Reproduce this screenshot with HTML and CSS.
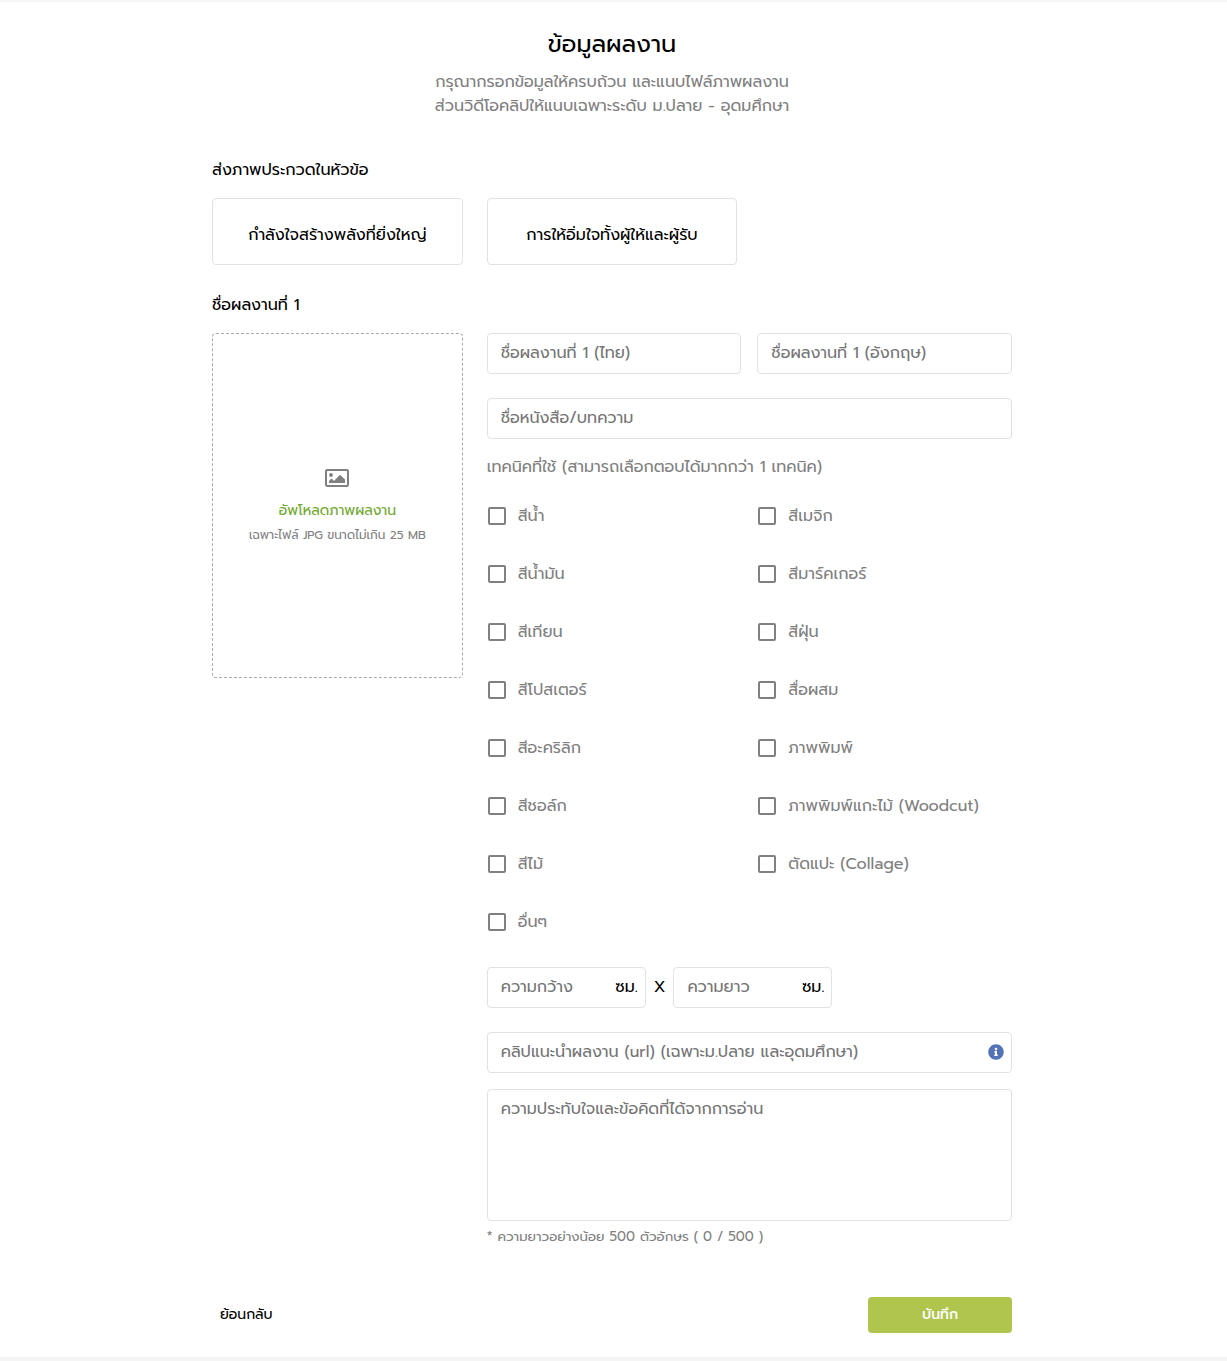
FILE: index.html
```html
<!DOCTYPE html>
<html lang="th">
<head>
<meta charset="utf-8">
<meta name="viewport" content="width=device-width, initial-scale=1">
<title>ข้อมูลผลงาน</title>
<link rel="stylesheet" href="styles.css">
</head>
<body>
<main class="page">
  <form class="entry">
    <header class="intro">
      <h1 class="title">ข้อมูลผลงาน</h1>
      <p class="lead">กรุณากรอกข้อมูลให้ครบถ้วน และแนบไฟล์ภาพผลงาน<br>ส่วนวิดีโอคลิปให้แนบเฉพาะระดับ ม.ปลาย - อุดมศึกษา</p>
    </header>

    <h2 class="section-title">ส่งภาพประกวดในหัวข้อ</h2>
    <div class="columns topics">
      <button type="button" class="topic">กำลังใจสร้างพลังที่ยิ่งใหญ่</button>
      <button type="button" class="topic">การให้อิ่มใจทั้งผู้ให้และผู้รับ</button>
    </div>

    <h2 class="section-title">ชื่อผลงานที่ 1</h2>
    <div class="columns">
      <button type="button" class="upload">
        <svg class="upload-icon" viewBox="0 0 24 18" aria-hidden="true">
          <path fill-rule="evenodd" d="M2.250 0H21.750A2.250 2.250 0 0 1 24 2.250V15.750A2.250 2.250 0 0 1 21.750 18H2.250A2.250 2.250 0 0 1 0 15.750V2.250A2.250 2.250 0 0 1 2.250 0ZM2.500 2A.5.500 0 0 0 2 2.500V15.500A.5.500 0 0 0 2.500 16H21.500A.5.500 0 0 0 22 15.500V2.500A.5.500 0 0 0 21.500 2Z"/>
          <circle cx="6" cy="6" r="1.900"/>
          <path d="M4 14V12L6.100 9.800Q6.500 9.500 6.900 9.800L9 12L14.500 6.200Q15 5.800 15.500 6.200L20 10.500V14Z"/>
        </svg>
        <span class="upload-title">อัพโหลดภาพผลงาน</span>
        <span class="upload-hint">เฉพาะไฟล์ JPG ขนาดไม่เกิน 25 MB</span>
      </button>

      <div class="fields">
        <div class="pair">
          <input class="field" type="text" aria-label="ชื่อผลงานที่ 1 (ไทย)" placeholder="ชื่อผลงานที่ 1 (ไทย)">
          <input class="field" type="text" aria-label="ชื่อผลงานที่ 1 (อังกฤษ)" placeholder="ชื่อผลงานที่ 1 (อังกฤษ)">
        </div>
        <input class="field book" type="text" aria-label="ชื่อหนังสือ/บทความ" placeholder="ชื่อหนังสือ/บทความ">

        <fieldset class="techniques">
          <legend class="legend">เทคนิคที่ใช้ (สามารถเลือกตอบได้มากกว่า 1 เทคนิค)</legend>
          <div class="pair options">
            <label class="option"><input class="tick" type="checkbox">สีน้ำ</label>
            <label class="option"><input class="tick" type="checkbox">สีเมจิก</label>
            <label class="option"><input class="tick" type="checkbox">สีน้ำมัน</label>
            <label class="option"><input class="tick" type="checkbox">สีมาร์คเกอร์</label>
            <label class="option"><input class="tick" type="checkbox">สีเทียน</label>
            <label class="option"><input class="tick" type="checkbox">สีฝุ่น</label>
            <label class="option"><input class="tick" type="checkbox">สีโปสเตอร์</label>
            <label class="option"><input class="tick" type="checkbox">สื่อผสม</label>
            <label class="option"><input class="tick" type="checkbox">สีอะคริลิก</label>
            <label class="option"><input class="tick" type="checkbox">ภาพพิมพ์</label>
            <label class="option"><input class="tick" type="checkbox">สีชอล์ก</label>
            <label class="option"><input class="tick" type="checkbox">ภาพพิมพ์แกะไม้ (Woodcut)</label>
            <label class="option"><input class="tick" type="checkbox">สีไม้</label>
            <label class="option"><input class="tick" type="checkbox">ตัดแปะ (Collage)</label>
            <label class="option"><input class="tick" type="checkbox">อื่นๆ</label>
          </div>
        </fieldset>

        <div class="dimensions">
          <label class="field measure"><input class="bare" type="text" aria-label="ความกว้าง" placeholder="ความกว้าง"><span>ซม.</span></label>
          <span class="times">X</span>
          <label class="field measure"><input class="bare" type="text" aria-label="ความยาว" placeholder="ความยาว"><span>ซม.</span></label>
        </div>

        <label class="field clip">
          <input class="bare" type="url" aria-label="คลิปแนะนำผลงาน" placeholder="คลิปแนะนำผลงาน (url) (เฉพาะม.ปลาย และอุดมศึกษา)">
          <svg class="info-icon" viewBox="0 0 512 512" aria-hidden="true">
            <path d="M256 8C119 8 8 119 8 256s111 248 248 248 248-111 248-248S393 8 256 8zm0 110c23 0 42 19 42 42s-19 42-42 42-42-19-42-42 19-42 42-42zm56 254c0 7-5 12-12 12h-88c-7 0-12-5-12-12v-24c0-7 5-12 12-12h12v-64h-12c-7 0-12-5-12-12v-24c0-7 5-12 12-12h64c7 0 12 5 12 12v100h12c7 0 12 5 12 12z"/>
          </svg>
        </label>

        <textarea class="field essay" aria-label="ความประทับใจและข้อคิดที่ได้จากการอ่าน" placeholder="ความประทับใจและข้อคิดที่ได้จากการอ่าน"></textarea>
        <small class="note">* ความยาวอย่างน้อย 500 ตัวอักษร ( 0 / 500 )</small>
      </div>
    </div>

    <footer class="actions">
      <button type="button" class="back">ย้อนกลับ</button>
      <button type="submit" class="save">บันทึก</button>
    </footer>
  </form>
</main>
</body>
</html>
```

FILE: styles.css
```css
* { box-sizing: border-box; }

body {
  margin: 0;
  background: #f5f5f5;
  color: #000;
  font-family: Prompt, Kanit, "Noto Sans Thai", "Noto Sans", sans-serif;
  font-size: 16px;
  line-height: 24px;
}

button, input, textarea { font: inherit; color: inherit; }
button { cursor: pointer; }

.page {
  margin: 2px 0 4px;
  padding: 24px 0;
  background: #fff;
}

.entry {
  max-width: 851px;
  margin: 0 auto;
  padding: 0 27px 0 24px;
}

.intro { text-align: center; }

.title {
  margin: 0 0 8px;
  font-size: 24px;
  line-height: 36px;
  font-weight: 400;
}

.lead { margin: 0; color: #808080; }

.section-title {
  margin: 28px 0 16px;
  font-size: 16px;
  line-height: 24px;
  font-weight: 400;
}

.intro + .section-title { margin-top: 40px; }

.columns {
  display: grid;
  grid-template-columns: repeat(3, minmax(0, 1fr));
  gap: 24px;
  align-items: start;
}

.topic {
  height: 67px;
  padding: 6px 8px 0;
  border: 1px solid #e2e2e2;
  border-radius: 4px;
  background: #fff;
}

.upload {
  display: flex;
  flex-direction: column;
  align-items: center;
  justify-content: center;
  height: 345px;
  padding: 4px 0 0;
  border: 1px dashed #aaa;
  border-radius: 4px;
  background: #fff;
}

.upload-icon {
  width: 24px;
  height: 18px;
  margin-bottom: 12px;
  fill: #808080;
}

.upload-title { color: #6fa92d; font-size: 14px; }
.upload-hint { color: #808080; font-size: 12px; }

.fields { grid-column: span 2; }

.pair {
  display: grid;
  grid-template-columns: repeat(2, minmax(0, 1fr));
  gap: 16px;
}

.field {
  display: block;
  width: 100%;
  height: 41px;
  padding: 6px 13px 8px;
  border: 1px solid #e2e2e2;
  border-radius: 4px;
  background: #fff;
}

::placeholder { color: #757575; opacity: 1; }

.book { margin-top: 24px; }

.techniques {
  min-width: 0;
  margin: 16px 0 0;
  padding: 0;
  border: 0;
}

.legend { padding: 0; color: #808080; }

.options { margin-top: 8px; row-gap: 0; }

.option {
  display: flex;
  align-items: center;
  height: 58px;
  gap: 12px;
  padding-left: 1px;
  color: #808080;
}

.tick {
  appearance: none;
  width: 18px;
  height: 18px;
  margin: 0;
  border: 2px solid #808080;
  border-radius: 2px;
  background: #fff;
}

.tick:checked { background: #afc54e; }

.dimensions {
  display: flex;
  align-items: center;
  gap: 8px;
  margin-top: 16px;
}

.measure { flex: 0 1 159px; }

.measure, .clip {
  display: flex;
  align-items: center;
  gap: 8px;
  padding-right: 7px;
}

.times { padding-bottom: 2px; }

.bare {
  flex: 1;
  width: 0;
  min-width: 0;
  padding: 0;
  border: 0;
  outline: 0;
  background: none;
}

.clip { margin-top: 24px; }

.info-icon { width: 16px; height: 16px; fill: #5472b8; }

.essay { height: 132px; margin-top: 16px; padding-top: 7px; resize: none; }

.note { display: block; margin-top: 4px; color: #808080; }

.actions {
  display: flex;
  align-items: center;
  justify-content: space-between;
  margin-top: 48px;
}

.back, .save {
  height: 36px;
  padding-bottom: 2px;
  border: 0;
  border-radius: 4px;
  font-size: 14px;
}

.back { padding: 0 8px; background: none; }

.save {
  width: 144px;
  padding: 0;
  background: #afc54e;
  color: #fff;
  font-weight: 500;
}
```
